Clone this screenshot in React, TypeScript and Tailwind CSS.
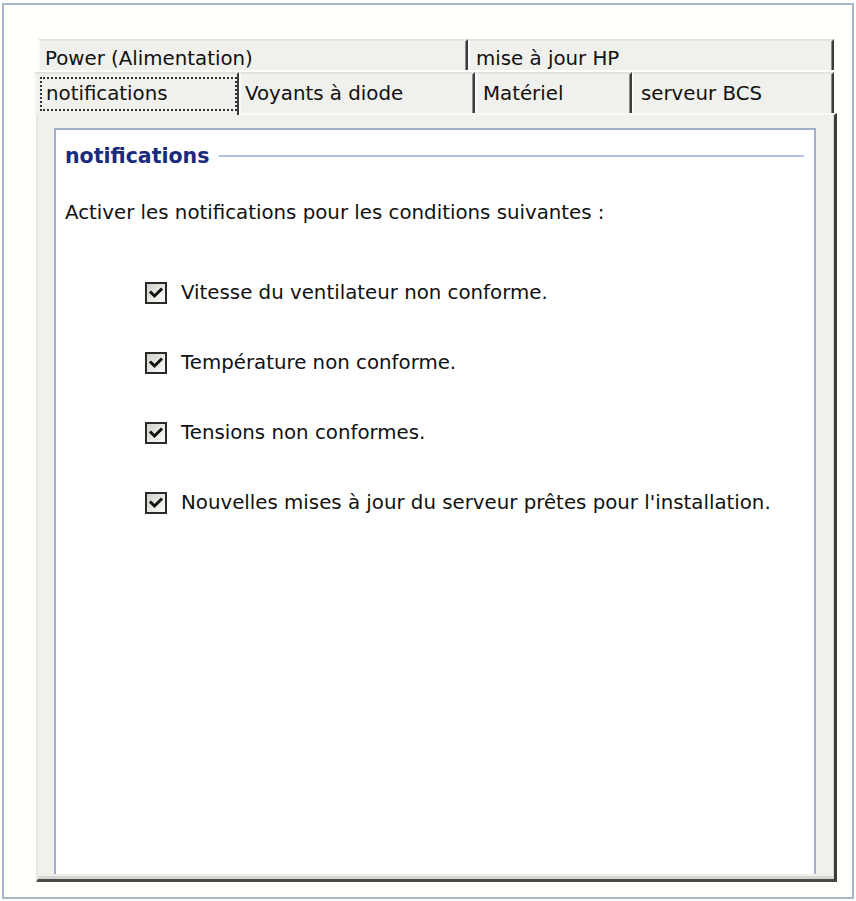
import React from 'react';

// Onglets du haut (première rangée) et de la rangée active
const rangee1 = [
  { label: 'Power (Alimentation)', w: 'w-[430px]', pl: 'pl-[5px]' },
  { label: 'mise à jour HP', w: 'w-[366px]', pl: 'pl-[6px]' },
];

const rangee2 = [
  { label: 'Voyants à diode', w: 'w-[236px]', pl: 'pl-[4px]' },
  { label: 'Matériel', w: 'w-[157px]', pl: 'pl-[6px]' },
  { label: 'serveur BCS', w: 'w-[202px]', pl: 'pl-[7px]' },
];

const conditions = [
  'Vitesse du ventilateur non conforme.',
  'Température non conforme.',
  'Tensions non conformes.',
  "Nouvelles mises à jour du serveur prêtes pour l'installation.",
];

function CaseCochee() {
  return (
    <div className="w-[22px] h-[22px] shrink-0 border-2 border-[#2a2a2a] bg-gradient-to-br from-[#cfcfc8] via-[#e8e8e3] to-[#fbfbf9] flex items-center justify-center">
      <svg width="16" height="16" viewBox="0 0 16 16">
        <path d="M3 7.5 L6.5 11 L13 4.5" fill="none" stroke="#111" strokeWidth="3" strokeLinecap="square" />
      </svg>
    </div>
  );
}

function Onglet({ label, w, pl, h }: { label: string; w: string; pl: string; h: string }) {
  return (
    <div
      className={`${w} ${h} ${pl} shrink-0 flex items-center bg-[#f0f0ec] border-t-2 border-l-2 border-t-[#e2e2de] border-l-[#fafafa] border-r-2 border-r-[#3c3c3c] shadow-[inset_-1px_0_0_#8c8c8c] text-[#111] whitespace-nowrap`}
    >
      {label}
    </div>
  );
}

export default function App() {
  return (
    <div className="w-[856px] h-[901px] bg-white pt-[3px] pl-[2px] font-['DejaVu_Sans',sans-serif] text-[19.8px] leading-[24px] text-[#111]">
      <div className="w-[852px] h-[896px] border-2 border-[#a9b5cb] bg-[#fffffc] pt-[34px] pl-[30px]">
        {/* contrôle à onglets */}
        <div className="w-[803px] flex flex-col">
          <div className="flex ml-[4px] mb-[2px]">
            {rangee1.map(o => (
              <Onglet key={o.label} {...o} h="h-[31px] pt-[6px] items-start" />
            ))}
          </div>

          <div className="flex">
            {/* onglet actif avec rectangle de focus */}
            <div className="w-[205px] h-[43px] shrink-0 bg-[#f0f0ec] border-t-2 border-l-2 border-t-[#e2e2de] border-l-[#fafafa] border-r-2 border-r-[#3c3c3c] pl-[4px] pt-[3px] pb-[4px] -mb-[2px] relative z-10">
              <div className="h-full border-2 border-dotted border-[#333] flex items-center pl-[4px]">notifications</div>
            </div>
            {rangee2.map(o => (
              <Onglet key={o.label} {...o} h="h-[41px]" />
            ))}
          </div>

          {/* panneau */}
          <div className="ml-[2px] w-[801px] h-[769px] bg-[#f0f0ec] border-t-2 border-l-2 border-t-[#fafafa] border-l-[#e6e6e2] border-r-[3px] border-b-[3px] border-r-[#3c3c3c] border-b-[#4a4a4a] shadow-[inset_-1px_-3px_0_#d6d6d2] pl-[16px] pr-[18px] pt-[13px] pb-[5px]">
            <div className="h-full bg-white border-t-2 border-l-2 border-r-2 border-[#9fb0cc] pl-[9px] pr-[10px]">
              <div className="flex items-center mt-[14px]">
                <span className="font-bold text-[20.5px] text-[#1a2a7c]">notifications</span>
                <div className="flex-1 h-[2px] bg-[#b4c2dc] ml-[10px]" />
              </div>

              <p className="mt-[33px]">Activer les notifications pour les conditions suivantes :</p>

              <div className="mt-[56px] ml-[80px] flex flex-col gap-[46px]">
                {conditions.map(c => (
                  <label key={c} className="flex items-center gap-[14px] h-[24px] whitespace-nowrap">
                    <CaseCochee />
                    <span>{c}</span>
                  </label>
                ))}
              </div>
            </div>
          </div>
        </div>
      </div>
    </div>
  );
}
